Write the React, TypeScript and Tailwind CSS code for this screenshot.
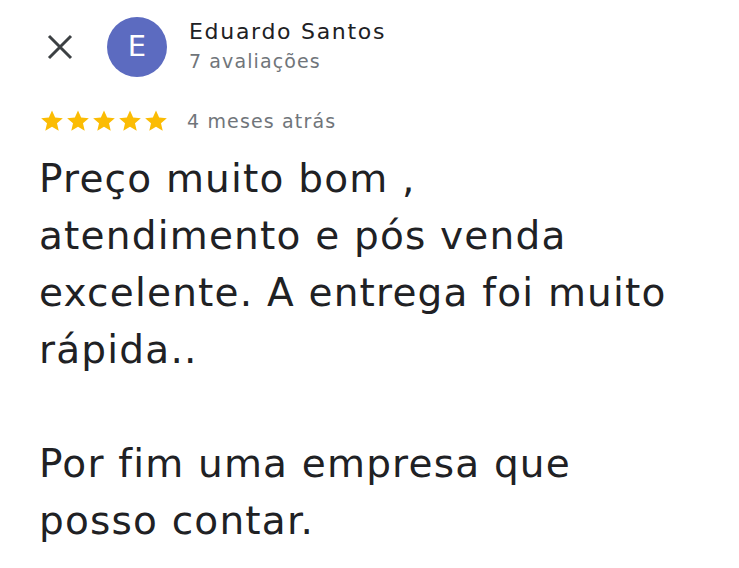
import React from "react";

const Star = () => (
  <svg width="26" height="26" viewBox="0 0 24 24" className="shrink-0">
    <path
      fill="#fbbc04"
      d="M12 2.2l2.9 6.6 7.1.6-5.4 4.7 1.6 7-6.2-3.7-6.2 3.7 1.6-7L2 9.4l7.1-.6z"
    />
  </svg>
);

export default function App() {
  return (
    <div
      className="w-[739px] h-[568px] bg-white overflow-hidden text-[#202124]"
      style={{ fontFamily: "'DejaVu Sans', 'Open Sans', sans-serif" }}
    >
      {/* header */}
      <div className="flex items-center pl-[46px] pt-[17px]">
        <svg width="28" height="28" viewBox="0 0 28 28" className="shrink-0">
          <path
            d="M3 3L25 25M25 3L3 25"
            stroke="#3c4043"
            strokeWidth="3"
            strokeLinecap="butt"
          />
        </svg>
        <div className="ml-[33px] w-[60px] h-[60px] rounded-full bg-[#5c6bc0] flex items-center justify-center text-white text-[29px] shrink-0">
          E
        </div>
        <div className="ml-[22px] flex flex-col -mt-[3px]">
          <div className="text-[22px] leading-[30px] tracking-[1.7px] text-[#202124]">Eduardo Santos</div>
          <div className="text-[19px] leading-[28px] tracking-[1.1px] text-[#70757a]">7 avaliações</div>
        </div>
      </div>

      {/* rating */}
      <div className="flex items-center pl-[39px] mt-[31px]">
        <div className="flex">
          <Star />
          <Star />
          <Star />
          <Star />
          <Star />
        </div>
        <span className="ml-[18px] text-[19px] text-[#70757a] leading-[26px] tracking-[1.15px]">4 meses atrás</span>
      </div>

      {/* body */}
      <div className="pl-[39px] pr-[20px] mt-[16px] text-[39px] leading-[57px] tracking-[1.2px] whitespace-nowrap">
        <p>Preço muito bom ,</p>
        <p>atendimento e pós venda</p>
        <p>excelente. A entrega foi muito</p>
        <p>rápida..</p>
        <p>&nbsp;</p>
        <p>Por fim uma empresa que</p>
        <p>posso contar.</p>
      </div>
    </div>
  );
}
